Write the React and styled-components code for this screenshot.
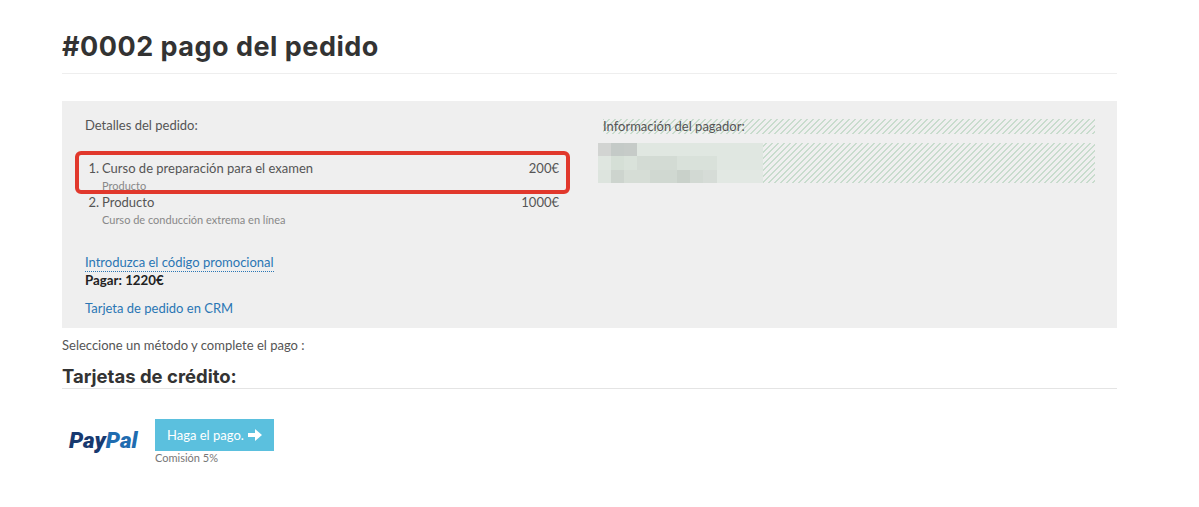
import React from 'react';
import styled, { createGlobalStyle } from 'styled-components';

const GlobalStyle = createGlobalStyle`
  html, body {
    margin: 0;
    padding: 0;
    background: #fff;
    font-family: Lato, "Open Sans", Arial, sans-serif;
    color: #444;
  }
`;

const stripes = `
  background-color: #efefef;
  background-image: linear-gradient(
    135deg,
    #c8dccd 0 14%,
    #efefef 14% 50%,
    #c8dccd 50% 64%,
    #efefef 64% 100%
  );
  background-size: 6px 6px;
`;

const items = [
  { name: 'Curso de preparación para el examen', note: 'Producto', price: '200€' },
  { name: 'Producto', note: 'Curso de conducción extrema en línea', price: '1000€' },
];

// pixelated block over the payer data: x, y, w, h, colour
const blur = [
  [0, 0, 165, 13, '#e0e7e1'],
  [0, 0, 13, 13, '#d2d4d2'],
  [13, 0, 13, 13, '#c4cac7'],
  [26, 0, 13, 13, '#c6cbc8'],
  [0, 13, 165, 14, '#e0e7e1'],
  [0, 13, 13, 14, '#dfe6e0'],
  [13, 13, 13, 14, '#d5dfd6'],
  [26, 13, 13, 14, '#d9e2da'],
  [39, 13, 40, 14, '#d3dbd4'],
  [79, 13, 40, 14, '#d9e1da'],
  [0, 27, 165, 13, '#e2e8e3'],
  [0, 27, 13, 13, '#dde4de'],
  [13, 27, 13, 13, '#cdd4ce'],
  [26, 27, 26, 13, '#d6ddd6'],
  [52, 27, 27, 13, '#d0d8d1'],
  [79, 27, 13, 13, '#c9d1ca'],
  [92, 27, 13, 13, '#d2d9d3'],
  [105, 27, 14, 13, '#d6dcd7'],
];

const Page = styled.div`
  width: 1055px;
  margin-left: 62px;
`;

const Title = styled.h1`
  margin: 0;
  padding: 30px 0 9px;
  height: 34px;
  line-height: 34px;
  font-family: Inter, "Open Sans", sans-serif;
  font-size: 27px;
  letter-spacing: 0.5px;
  font-weight: 700;
  color: #333;
  border-bottom: 1px solid #eee;
`;

const Panel = styled.section`
  position: relative;
  margin-top: 27px;
  height: 227px;
  background: #efefef;
  display: grid;
  grid-template-columns: 541px 1fr;
`;

const Details = styled.div`
  padding: 16px 44px 0 23px;
  position: relative;
`;

const Label = styled.div`
  font-size: 13px;
  line-height: 17px;
  color: #555;
`;

const OrderList = styled.ol`
  list-style: none;
  margin: 26px 0 0;
  padding: 0;
`;

const OrderItem = styled.li`
  height: 34px;
  display: grid;
  grid-template-columns: 17px 1fr auto;
  font-size: 13px;
  line-height: 17px;
  color: #555;
`;

const Num = styled.span`
  text-align: right;
  padding-right: 3px;
  white-space: nowrap;
`;

const ItemNote = styled.div`
  font-size: 11px;
  line-height: 17px;
  color: #888;
`;

const Link = styled.a`
  color: #2a76b4;
  font-size: 13px;
  line-height: 17px;
  text-decoration: none;
  display: ${(p) => (p.$dotted ? 'inline-block' : 'block')};
  border-bottom: ${(p) => (p.$dotted ? '1px dotted #2a76b4' : 'none')};
`;

const PromoWrap = styled.div`
  margin-top: 23px;
  height: 21px;
`;

const Total = styled.div`
  font-size: 13.3px;
  font-weight: 700;
  line-height: 17px;
  color: #222;
  margin-bottom: 11px;
`;

const Highlight = styled.div`
  position: absolute;
  left: 13px;
  top: 50px;
  width: 487px;
  height: 35px;
  border: 4px solid #e1382c;
  border-radius: 6px;
  pointer-events: none;
`;

const Payer = styled.div`
  padding: 18px 22px 0 0;
`;

const PayerLabel = styled.div`
  ${stripes}
  height: 15px;
  font-size: 13px;
  line-height: 15px;
  color: #555;
`;

const PayerData = styled.div`
  ${stripes}
  margin: 9px 0 0 -5px;
  height: 40px;
`;

const BlurSvg = styled.svg`
  display: block;
`;

const Prompt = styled.p`
  margin: 9px 0 0;
  font-size: 13px;
  line-height: 17px;
  color: #555;
`;

const SectionTitle = styled.h2`
  margin: 10px 0 0;
  font-family: Inter, "Open Sans", sans-serif;
  font-size: 18.5px;
  line-height: 24px;
  font-weight: 700;
  color: #333;
  border-bottom: 1px solid #e4e4e4;
`;

const Methods = styled.div`
  display: flex;
  gap: 16px;
  margin-top: 30px;
`;

const PayPal = styled.div`
  width: 77px;
  padding: 8px 0 0 7px;
  box-sizing: border-box;
  font-family: Roboto, Arial, sans-serif;
  font-size: 22.5px;
  line-height: 26px;
  font-weight: 900;
  font-style: italic;
  color: #17396f;
  span {
    color: #1f6cb0;
  }
`;

const PayButton = styled.button`
  display: flex;
  align-items: center;
  gap: 4px;
  width: 119px;
  height: 32px;
  padding: 0 0 0 12px;
  border: 0;
  background: #5bc0de;
  color: #fff;
  font-family: inherit;
  font-size: 13px;
`;

const Fee = styled.div`
  font-size: 11px;
  line-height: 14px;
  color: #777;
`;

const ArrowIcon = styled.svg`
  width: 14px;
  height: 12px;
  fill: #fff;
`;

export default function App() {
  return (
    <>
      <GlobalStyle />
      <Page>
        <Title>#0002 pago del pedido</Title>
        <Panel>
          <Details>
            <Label>Detalles del pedido:</Label>
            <OrderList>
              {items.map((item, i) => (
                <OrderItem key={item.name}>
                  <Num>{i + 1}.</Num>
                  <div>
                    {item.name}
                    <ItemNote>{item.note}</ItemNote>
                  </div>
                  <span>{item.price}</span>
                </OrderItem>
              ))}
            </OrderList>
            <PromoWrap>
              <Link href="#" $dotted>Introduzca el código promocional</Link>
            </PromoWrap>
            <Total>Pagar: 1220€</Total>
            <Link href="#">Tarjeta de pedido en CRM</Link>
            <Highlight />
          </Details>
          <Payer>
            <PayerLabel>Información del pagador:</PayerLabel>
            <PayerData>
              <BlurSvg width="165" height="40" viewBox="0 0 165 40">
                {blur.map(([x, y, w, h, c]) => (
                  <rect key={`${x}-${y}-${w}`} x={x} y={y} width={w} height={h} fill={c} />
                ))}
              </BlurSvg>
            </PayerData>
          </Payer>
        </Panel>
        <Prompt>Seleccione un método y complete el pago :</Prompt>
        <SectionTitle>Tarjetas de crédito:</SectionTitle>
        <Methods>
          <PayPal>Pay<span>Pal</span></PayPal>
          <div>
            <PayButton>
              Haga el pago.
              <ArrowIcon viewBox="0 0 14 12">
                <path d="M0 4h7V0l7 6-7 6V8H0z" />
              </ArrowIcon>
            </PayButton>
            <Fee>Comisión 5%</Fee>
          </div>
        </Methods>
      </Page>
    </>
  );
}
